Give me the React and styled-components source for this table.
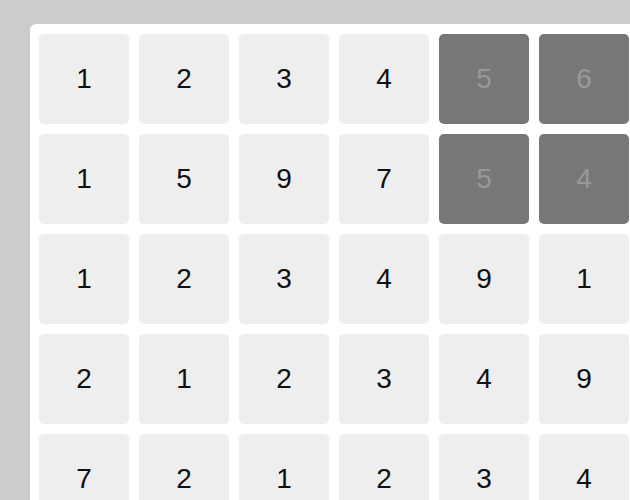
import React from "react";
import styled, { createGlobalStyle } from "styled-components";

const Global = createGlobalStyle`
  html, body { margin: 0; padding: 0; background: #cccccc; overflow: hidden; }
  body { font-family: "Liberation Sans", Arial, sans-serif; }
`;

const Page = styled.div`
  padding: 24px 0 0 30px;
  width: 630px;
  height: 500px;
  box-sizing: border-box;
  overflow: hidden;
`;

const Board = styled.div`
  background: #ffffff;
  border-radius: 6px;
  padding: 10px 20px 10px 9px;
  display: grid;
  grid-template-columns: repeat(6, 90px);
  grid-auto-rows: 90px;
  gap: 10px;
  width: max-content;
`;

const Cell = styled.div`
  border-radius: 5px;
  background: ${(p) => (p.$dim ? "#777777" : "#eeeeee")};
  color: ${(p) => (p.$dim ? "#999999" : "#111111")};
  display: flex;
  align-items: center;
  justify-content: center;
  font-size: 28px;
`;

const rows = [
  [1, 2, 3, 4, 5, 6],
  [1, 5, 9, 7, 5, 4],
  [1, 2, 3, 4, 9, 1],
  [2, 1, 2, 3, 4, 9],
  [7, 2, 1, 2, 3, 4],
];

const dim = new Set(["0-4", "0-5", "1-4", "1-5"]);

export default function App() {
  return (
    <>
      <Global />
      <Page>
        <Board>
          {rows.map((r, i) =>
            r.map((v, j) => (
              <Cell key={`${i}-${j}`} $dim={dim.has(`${i}-${j}`)}>
                {v}
              </Cell>
            ))
          )}
        </Board>
      </Page>
    </>
  );
}
